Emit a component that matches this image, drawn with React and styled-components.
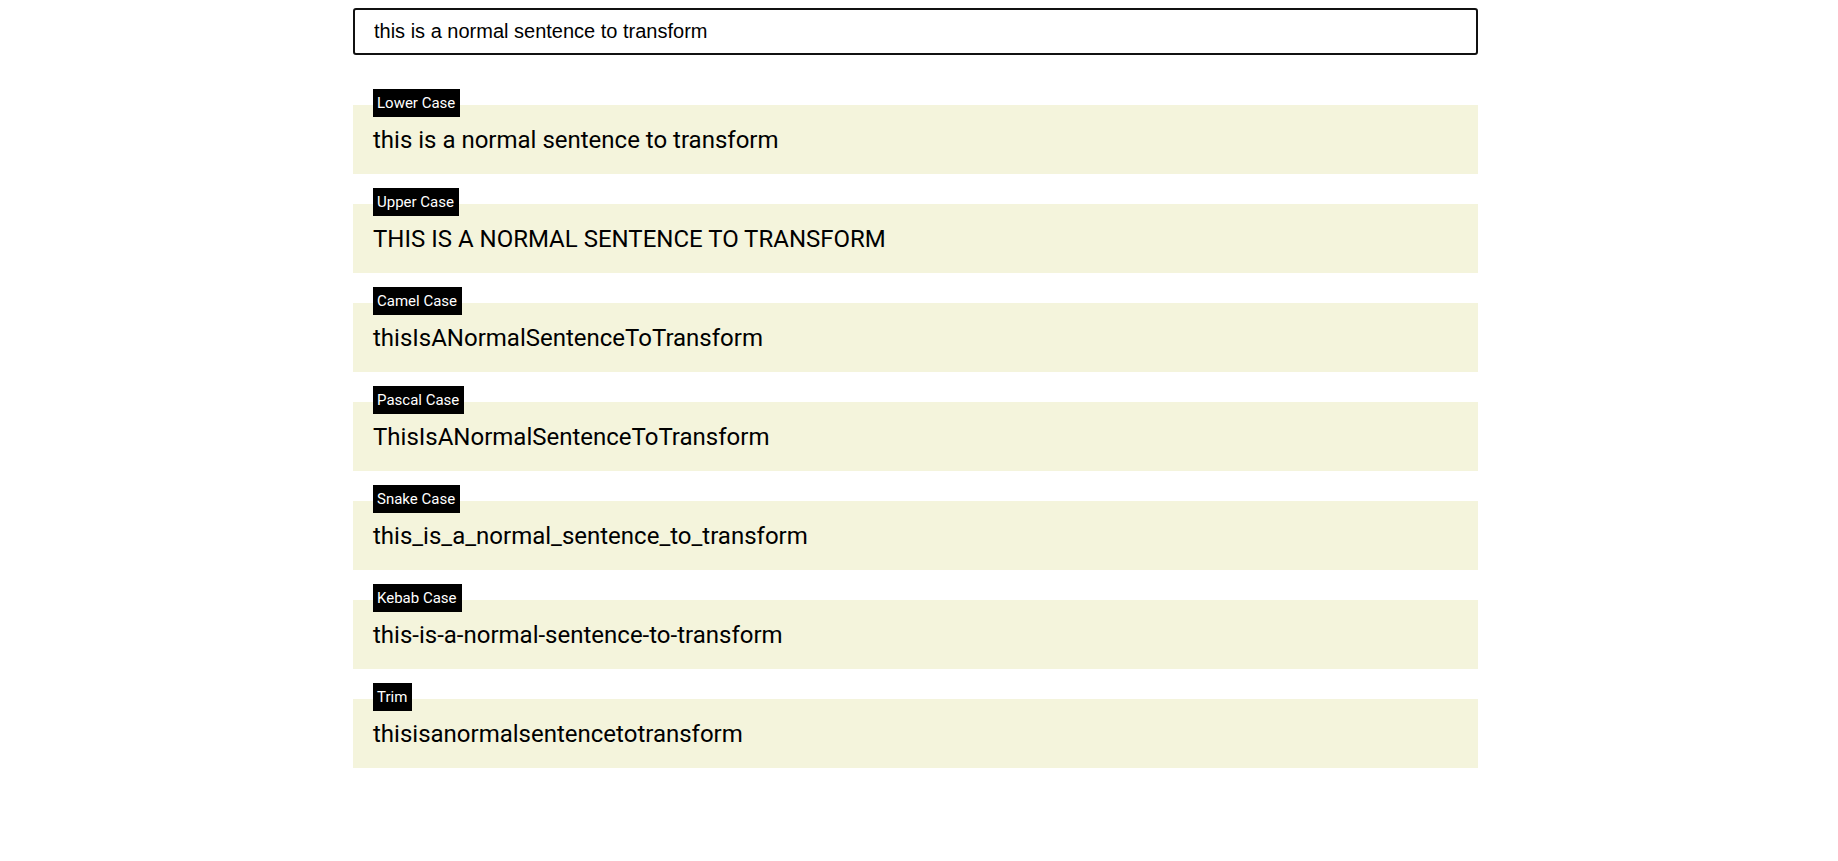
import React, { useState } from "react";
import styled, { createGlobalStyle } from "styled-components";

const Global = createGlobalStyle`
  html, body { margin: 0; padding: 0; background: #fff; }
  body { font-family: Roboto, "Liberation Sans", Arial, sans-serif; color: #000; }
`;

const Page = styled.div`
  padding: 8px 0 40px calc(50% - 566px);
`;

const Container = styled.div`
  width: 1125px;
  display: flex;
  flex-direction: column;
`;

const Input = styled.input`
  box-sizing: border-box;
  width: 100%;
  height: 47px;
  border: 2px solid #111;
  border-radius: 3px;
  padding: 0 19px;
  font-family: "Liberation Sans", Arial, sans-serif;
  font-size: 20px;
  color: #000;
  caret-color: #000;
  outline: none;
  background: #fff;
`;

const List = styled.div`
  display: flex;
  flex-direction: column;
  gap: 30px;
  margin-top: 50px;
`;

const Card = styled.div`
  position: relative;
  box-sizing: border-box;
  height: 69px;
  background: #f4f4dc;
  padding: 21px 20px 0;
`;

const Label = styled.span`
  position: absolute;
  top: -16px;
  left: 20px;
  height: 28px;
  line-height: 28px;
  padding: 0 5px 0 4px;
  background: #000;
  color: #fff;
  font-family: Roboto, sans-serif;
  font-size: 15px;
`;

const Value = styled.div`
  font-family: Roboto, sans-serif;
  font-size: 24px;
  line-height: 28px;
  white-space: pre;
`;

const words = (s) => s.trim().split(/[\s_-]+/).filter(Boolean);
const cap = (w) => w.charAt(0).toUpperCase() + w.slice(1).toLowerCase();

const transforms = [
  ["Lower Case", (s) => s.toLowerCase()],
  ["Upper Case", (s) => s.toUpperCase()],
  ["Camel Case", (s) => words(s).map((w, i) => (i ? cap(w) : w.toLowerCase())).join("")],
  ["Pascal Case", (s) => words(s).map(cap).join("")],
  ["Snake Case", (s) => words(s).map((w) => w.toLowerCase()).join("_")],
  ["Kebab Case", (s) => words(s).map((w) => w.toLowerCase()).join("-")],
  ["Trim", (s) => s.replace(/\s+/g, "")],
];

export default function App() {
  const [text, setText] = useState("this is a normal sentence to transform");
  return (
    <Page>
      <Global />
      <Container>
        <Input autoFocus value={text} onChange={(e) => setText(e.target.value)} />
        <List>
          {transforms.map(([name, fn]) => (
            <Card key={name}>
              <Label>{name}</Label>
              <Value>{fn(text)}</Value>
            </Card>
          ))}
        </List>
      </Container>
    </Page>
  );
}
